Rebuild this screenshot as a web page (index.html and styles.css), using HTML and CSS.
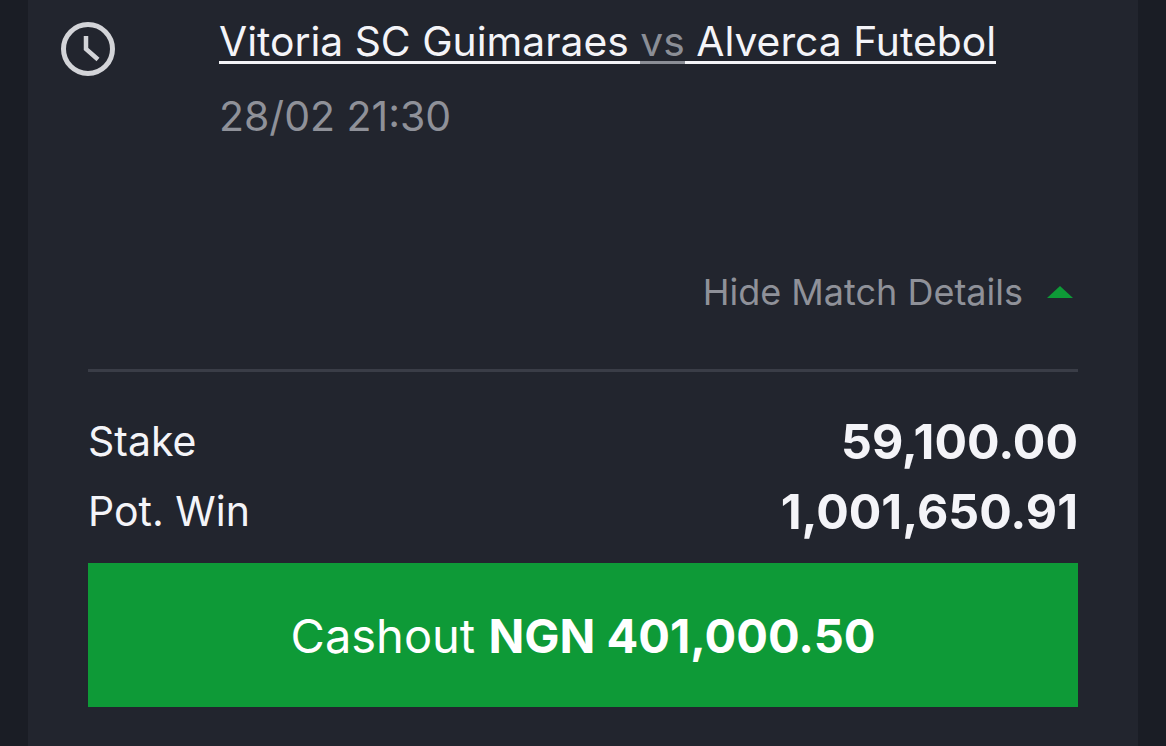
FILE: index.html
```html
<!DOCTYPE html>
<html lang="en">
<head>
    <meta charset="UTF-8">
    <title>Bet Details</title>
    <link rel="stylesheet" href="styles.css">
</head>
<body>
    <div class="card">
        <div class="match">
            <svg class="clock" width="56" height="56" viewBox="0 0 56 56">
                <circle cx="28" cy="28" r="24.5" fill="none" stroke="#d3d4d8" stroke-width="5"/>
                <path d="M26 15 V28 L38 38.5" fill="none" stroke="#d3d4d8" stroke-width="4.5"/>
            </svg>
            <div class="match-info">
                <div class="teams"><span>Vitoria SC Guimaraes </span><span class="vs">vs</span><span> Alverca Futebol</span></div>
                <div class="date">28/02 21:30</div>
            </div>
        </div>
        <div class="toggle">
            <span>Hide Match Details</span>
            <span class="arrow"></span>
        </div>
        <div class="summary">
            <div class="row">
                <span class="label">Stake</span>
                <span class="value">59,100.00</span>
            </div>
            <div class="row">
                <span class="label">Pot. Win</span>
                <span class="value">1,001,650.91</span>
            </div>
        </div>
        <button class="cashout">Cashout <b>NGN 401,000.50</b></button>
    </div>
</body>
</html>
```
FILE: styles.css
```css
html, body {
    margin: 0;
    padding: 0;
    height: 746px;
    overflow: hidden;
    background-color: #1a1d25;
    font-family: 'Inter', sans-serif;
}

.card {
    box-sizing: border-box;
    width: 1110px;
    height: 746px;
    margin-left: 28px;
    padding: 0 60px;
    background-color: #22252e;
}

.match {
    display: flex;
    margin-left: -28px;
    padding-top: 21px;
}

.clock {
    flex: none;
    margin-right: 103px;
}

.teams {
    font-size: 40.8px;
    line-height: 40px;
    color: #f4f4f8;
    display: flex;
    width: fit-content;
    white-space: pre;
}

.teams span {
    border-bottom: 3px solid #f4f4f8;
}

.teams .vs {
    color: #8b8e96;
    border-bottom-color: #8b8e96;
}

.date {
    margin-top: 28px;
    font-size: 41px;
    line-height: 48px;
    color: #8f9199;
}

.toggle {
    display: flex;
    justify-content: flex-end;
    align-items: center;
    gap: 24px;
    margin-top: 130px;
    padding-right: 5px;
    font-size: 36px;
    line-height: 44px;
    color: #8f9199;
}

.arrow {
    width: 0;
    height: 0;
    border-left: 13px solid transparent;
    border-right: 13px solid transparent;
    border-bottom: 12px solid #0e9a37;
}

.summary {
    margin-top: 55px;
    padding-top: 34px;
    border-top: 3px solid #3a3d47;
}

.row {
    display: flex;
    justify-content: space-between;
    align-items: center;
    height: 70px;
    color: #f4f4f8;
}

.label {
    font-size: 41px;
}

.value {
    font-size: 48.3px;
    font-weight: 700;
}

.cashout {
    display: block;
    width: 100%;
    height: 144px;
    margin-top: 17px;
    border: none;
    background-color: #0e9a37;
    color: #fff;
    font-family: 'Inter', sans-serif;
    font-size: 47px;
}
```
